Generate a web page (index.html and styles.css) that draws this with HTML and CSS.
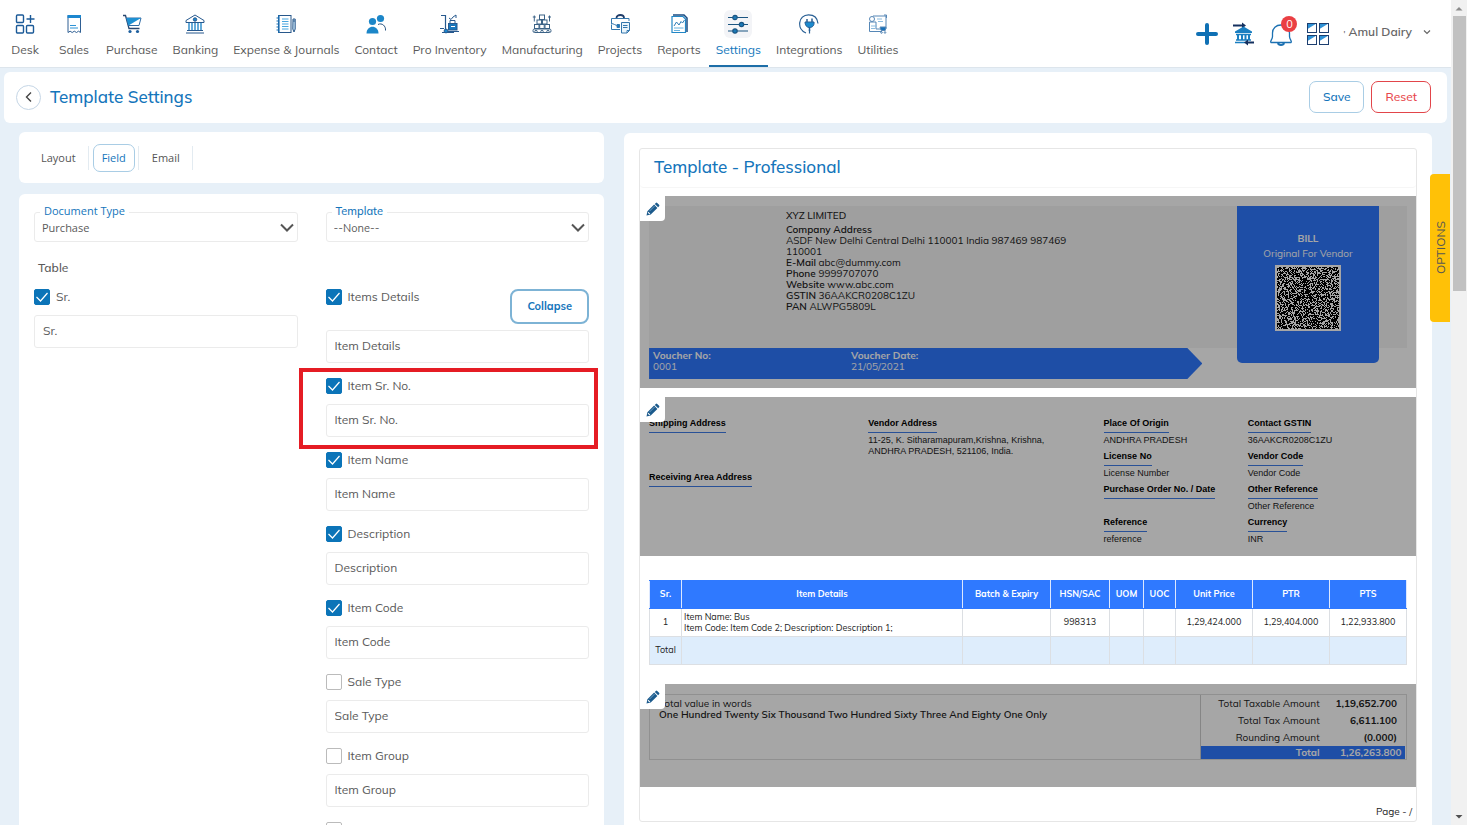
FILE: index.html
```html
<!DOCTYPE html>
<html lang="en">
<head>
<meta charset="utf-8">
<meta name="viewport" content="width=device-width, initial-scale=1">
<title>Template Settings</title>
<link rel="stylesheet" href="styles.css">
</head>
<body>
<svg class="sprite" aria-hidden="true">
  <symbol id="pencil" viewBox="0 0 14 14">
    <path fill="#1b5a8c" d="M9.8.9a1 1 0 0 1 1.4 0l1.9 1.9a1 1 0 0 1 0 1.4l-1 1-3.3-3.3zM8.1 2.6l3.300 3.300-6.700 6.700L.5 13.500l.9-4.200z"/>
    <path fill="#fff" d="M2.300 9.700l2 2-1 .5-1.500-1.500z"/>
    <path stroke="#8db9da" stroke-width=".7" d="M3.600 9l5-5"/>
  </symbol>
</svg>
<div class="app">
  <div class="page">
    <header class="topbar">
      <nav class="nav">
        <a class="nav-item" href="#"><span class="nav-icon"><svg viewBox="0 0 20 20" fill="none" stroke="#1b5a98" stroke-width="1.400"><rect x="1.500" y="1" width="7" height="7.500" rx="1"/><rect x="1.500" y="11.500" width="7" height="7.500" rx="1"/><rect x="11.500" y="11.500" width="7" height="7.500" rx="1"/><path d="M15.500 1v8M11.500 5h8"/></svg></span>Desk</a>
        <a class="nav-item" href="#"><span class="nav-icon"><svg viewBox="0 0 20 20" fill="none"><path d="M4 1.500h12.500v17l-2-1.300-2 1.300-2.200-1.300-2.100 1.300-2.100-1.300L4 18.500z" stroke="#2f5f93"/><path d="M3.500 1h13.500v3H3.500z" fill="#1c87cf"/><path d="M6 11.500h6M6 14h8" stroke="#2d93d6"/></svg></span>Sales</a>
        <a class="nav-item" href="#"><span class="nav-icon"><svg viewBox="0 0 20 20" fill="none"><path d="M1 1.500h2.500L7 14.500h10.500" stroke="#27466f" stroke-width="1.300"/><path d="M4.500 4H19l-2 7.500H6.500z" stroke="#2f6ba5"/><path d="M4.500 4H19L6.500 11.500z" fill="#1e90d2"/><circle cx="8" cy="17.500" r="1.600" fill="#1d5f9e"/><circle cx="15.500" cy="17.500" r="1.600" fill="#1d5f9e"/></svg></span>Purchase</a>
        <a class="nav-item" href="#"><span class="nav-icon"><svg viewBox="0 0 20 20" fill="none" stroke="#27598e"><path d="M1 6.500L10 1l9 5.500v2H1z"/><circle cx="10" cy="5.500" r="1.700" fill="#1c87cf"/><path d="M4 9v7M7 9v7M10 9v7M13 9v7M16 9v7" stroke="#2688c9" stroke-width="1.400"/><path d="M2 16.500h16M1 19h18" stroke-width="1.200"/></svg></span>Banking</a>
        <a class="nav-item" href="#"><span class="nav-icon"><svg viewBox="0 0 20 20" fill="none" stroke="#28588b"><rect x="2.500" y="1.500" width="12.500" height="17"/><path d="M.5 4h3M.5 7h3M.5 10h3M.5 13h3M.5 16h3M3 1v18" stroke="#1b70b5" stroke-width="1.200"/><path d="M6 5h6.500M6 7.500h6.500M6 10h6.500M6 12.500h6.500M6 15h6.500" stroke="#49a6df"/><path d="M17 5h2.200v10L18 18l-1.200-3zM17 7h2" fill="#c7e2f5"/></svg></span>Expense &amp; Journals</a>
        <a class="nav-item" href="#"><span class="nav-icon"><svg viewBox="0 0 20 20"><g fill="#1c86c8"><circle cx="6.500" cy="7.500" r="3.600"/><circle cx="14.500" cy="4.500" r="3.600"/><path d="M.5 19.500c0-9 12-9 12 0z"/></g><path d="M12 10.500c4-2 8 1.500 7.500 6" fill="none" stroke="#27527f"/></svg></span>Contact</a>
        <a class="nav-item" href="#"><span class="nav-icon"><svg viewBox="0 0 20 20" fill="none" stroke="#27598e"><path d="M1 1.500h4.500V16M7.500 17.500H19M0 14.500h4M2 18.500h12" stroke-width="1.200"/><circle cx="6" cy="17" r="1.900" fill="#1c87cf"/><rect x="8.500" y="9.500" width="8.500" height="6.500" fill="#1878be"/><path d="M10 9V6.500h5V9M9 4l2 1.500 2-2.500 3-2v3M11 12h3" /><path d="M11 12.500h4" stroke="#fff"/></svg></span>Pro Inventory</a>
        <a class="nav-item" href="#"><span class="nav-icon"><svg viewBox="0 0 20 20" fill="none" stroke="#3b6286"><rect x="7.500" y="1" width="5" height="4.500"/><rect x="5" y="6" width="4.500" height="4"/><rect x="10.500" y="6" width="4.500" height="4"/><rect x="2.500" y="10.500" width="4.500" height="4"/><rect x="7.700" y="10.500" width="4.500" height="4"/><rect x="13" y="10.500" width="4.500" height="4"/><rect x="1" y="15" width="18" height="3.500" rx="1.500"/><path d="M.8 3h3M2.300 1.500v6M16 3h3M17.500 1.500v6"/><circle cx="4" cy="17.500" r="1.200"/><circle cx="10" cy="17.500" r="1.200"/><circle cx="16" cy="17.500" r="1.200"/></svg></span>Manufacturing</a>
        <a class="nav-item" href="#"><span class="nav-icon"><svg viewBox="0 0 20 20" fill="none" stroke="#3477ad"><path d="M6.500 4c0-4 7.500-4 7.500 0" stroke="#1f3c69" stroke-width="1.800"/><path d="M10 15.500H1.500v-5M1.500 9V4.500h17.500V7" /><path d="M1 9.500c3 0 4 2 8 2.500" /><path d="M7 10.500h2.500v3H7z" fill="#1c79bb"/><path d="M11.500 8.500h8v8L17 19h-5.500z" fill="#eaf5fc"/><path d="M13 11.500h4.500M13 13.500h4.500M17 19v-2.500h2.500"/></svg></span>Projects</a>
        <a class="nav-item" href="#"><span class="nav-icon"><svg viewBox="0 0 20 20" fill="none"><path d="M3 2.500h11l2.500 2.500v13.500H3z" stroke="#2287c6" stroke-width="1.200"/><path d="M4 1h11l3 3v14" stroke="#1a4c83" stroke-width="1.500"/><path d="M5 12l2.500-4 2.500 3 2-3.500 1.500 1.500 2-3" stroke="#2c7cb6"/><path d="M5 14h9.500M5 16.500h6" stroke="#67b2df"/></svg></span>Reports</a>
        <a class="nav-item active" href="#"><span class="nav-icon"><svg viewBox="0 0 20 20" stroke="#1b5582" stroke-width="1.200" fill="#1c79b7"><path d="M0 3.500h20M0 10.500h20M0 17h20"/><circle cx="7" cy="3.500" r="2.200"/><circle cx="13.500" cy="10.500" r="2.200"/><circle cx="7" cy="17" r="2.200"/></svg></span>Settings</a>
        <a class="nav-item" href="#"><span class="nav-icon"><svg viewBox="0 0 20 20" fill="none" stroke="#285f94"><path d="M10.500 19.500v-3.800M7 19C-2.500 15.500-1 1 9.500.8 15.500.8 18.500 4 19 9.500" stroke-width="1.200"/><path d="M6 8h9c.5 3.500-1.500 5.500-4.500 5.500S6 11 6 8z" fill="#1c8bce"/><path d="M8 8V5M13 8V4.500M10.500 13v4" stroke-width="1.500"/></svg></span>Integrations</a>
        <a class="nav-item" href="#"><span class="nav-icon"><svg viewBox="0 0 20 20" fill="none" stroke="#5687b6"><path d="M5 2h13v13M18 15H8V8H1.500v9.500H14"/><circle cx="4" cy="5" r="2.500"/><path d="M9 5h5M10 7.500h5M3 12h6M3 14.500h4" stroke="#8bbce0"/><path d="M12 13h6l-.8 3.500h-4z" fill="#1670b8"/><circle cx="13.500" cy="18.500" r=".8"/><circle cx="17" cy="18.500" r=".8"/><path d="M16 1h2.500v3"/></svg></span>Utilities</a>
      </nav>
      <div class="tools">
        <button class="tool" type="button" aria-label="Add"><svg viewBox="0 0 24 24"><path d="M12 3v18M3 12h18" stroke="#0f70b4" stroke-width="4" stroke-linecap="round"/></svg></button>
        <button class="tool" type="button" aria-label="Bank transfer"><svg viewBox="0 0 24 24" fill="none"><path d="M1 3.500h10" stroke="#14305f" stroke-width="2"/><path d="M10 .5L14 3.500 10 6.500z" fill="#14305f"/><path d="M3 9.500L11.500 4.500l8.500 5v1.500H3z" fill="#1b7fc1"/><path d="M4 12.500h15M4 18h15M3 20.500h10" stroke="#1b7fc1" stroke-width="1.500"/><path d="M6 12v6M10 12v6M13.500 12v6M17 12v6" stroke="#1b7fc1" stroke-width="2"/><path d="M15 20.500h7" stroke="#14305f" stroke-width="2"/><path d="M16 17.500l-4 3 4 3z" fill="#14305f"/></svg></button>
        <button class="tool bell" type="button" aria-label="Notifications"><svg viewBox="0 0 24 24" fill="none" stroke="#1c71b2" stroke-width="1.300"><path d="M2 20.500c-1.500-1 1.500-3 1.500-6V11c0-4.500 3.500-8 8.500-8s8.500 3.500 8.500 8v3.500c0 3 3 5 1.500 6z"/><path d="M9 21c.5 2.500 5.500 2.500 6 0" stroke-width="2"/></svg><span class="badge">0</span></button>
        <button class="tool" type="button" aria-label="Apps"><svg viewBox="0 0 24 24" fill="none"><g fill="#2d91d6"><path d="M1.500 1.500h9l-9 5.500zM13.500 1.500h9l-9 5.500zM1.500 13.500h9l-9 5.500zM13.500 13.500h9l-9 5.500z"/></g><g stroke="#1d3f70"><rect x="1.500" y="1.500" width="9" height="9"/><rect x="13.500" y="1.500" width="9" height="9"/><rect x="1.500" y="13.500" width="9" height="9"/><rect x="13.500" y="13.500" width="9" height="9"/></g></svg></button>
        <button class="account" type="button"><span><small>'</small> Amul Dairy</span><svg viewBox="0 0 8 6" fill="none" stroke="#666" stroke-width="1.200"><path d="M1 1.500l3 3 3-3"/></svg></button>
      </div>
    </header>

    <section class="titlebar">
      <button class="back" type="button" aria-label="Back"><svg viewBox="0 0 10 10" fill="none" stroke="#444" stroke-width="1.400"><path d="M7 .5L2.500 5 7 9.500"/></svg></button>
      <h1>Template Settings</h1>
      <button class="btn" type="button">Save</button>
      <button class="btn danger" type="button">Reset</button>
    </section>

    <main class="content">
      <div class="left">
        <div class="card tabs">
          <div class="tab-slot"><button class="tab" type="button">Layout</button></div>
          <div class="tab-slot"><button class="tab on" type="button">Field</button></div>
          <div class="tab-slot"><button class="tab" type="button">Email</button></div>
        </div>
        <form class="card form">
          <div class="select-box">
            <label for="doc">Document Type</label>
            <select id="doc"><option>Purchase</option></select>
            <svg viewBox="0 0 14 9" fill="none" stroke="#555" stroke-width="2"><path d="M1 1.500l6 6 6-6"/></svg>
          </div>
          <div class="select-box rounded-face">
            <label for="tpl">Template</label>
            <select id="tpl"><option>--None--</option></select>
            <svg viewBox="0 0 14 9" fill="none" stroke="#555" stroke-width="2"><path d="M1 1.500l6 6 6-6"/></svg>
          </div>
          <h2>Table</h2>
          <div class="column">
            <div class="field">
              <label class="check"><input type="checkbox" checked>Sr.</label>
              <input class="text" type="text" aria-label="Sr." value="Sr.">
            </div>
          </div>
          <div class="column">
            <div class="field">
              <div class="check-row">
                <label class="check"><input type="checkbox" checked>Items Details</label>
                <button class="btn collapse" type="button">Collapse</button>
              </div>
              <input class="text" type="text" aria-label="Items Details" value="Item Details">
            </div>
            <div class="field marked">
              <label class="check"><input type="checkbox" checked>Item Sr. No.</label>
              <input class="text" type="text" aria-label="Item Sr. No." value="Item Sr. No.">
            </div>
            <div class="field">
              <label class="check"><input type="checkbox" checked>Item Name</label>
              <input class="text" type="text" aria-label="Item Name" value="Item Name">
            </div>
            <div class="field">
              <label class="check"><input type="checkbox" checked>Description</label>
              <input class="text" type="text" aria-label="Description" value="Description">
            </div>
            <div class="field">
              <label class="check"><input type="checkbox" checked>Item Code</label>
              <input class="text" type="text" aria-label="Item Code" value="Item Code">
            </div>
            <div class="field">
              <label class="check"><input type="checkbox">Sale Type</label>
              <input class="text" type="text" aria-label="Sale Type" value="Sale Type">
            </div>
            <div class="field">
              <label class="check"><input type="checkbox">Item Group</label>
              <input class="text" type="text" aria-label="Item Group" value="Item Group">
            </div>
            <div class="field">
              <label class="check"><input type="checkbox" aria-label="Next field"></label>
            </div>
          </div>
        </form>
      </div>

      <div class="card preview">
        <article class="sheet">
          <h2 class="sheet-title">Template - Professional</h2>

          <section class="block">
            <button class="edit" type="button" aria-label="Edit header"><svg><use href="#pencil"/></svg></button>
            <div class="company">
              <div class="company-text">
                <p class="company-name">XYZ LIMITED</p>
                <p><b>Company Address</b></p>
                <p>ASDF New Delhi Central Delhi 110001 India 987469 987469<br>110001</p>
                <p><b>E-Mail</b> abc@dummy.com</p>
                <p><b>Phone</b> 9999707070</p>
                <p><b>Website</b> www.abc.com</p>
                <p><b>GSTIN</b> 36AAKCR0208C1ZU</p>
                <p><b>PAN</b> ALWPG5809L</p>
              </div>
              <div class="bill">
                <b>BILL</b>
                <span>Original For Vendor</span>
                <svg id="qr" viewBox="0 0 66 66" shape-rendering="crispEdges" role="img" aria-label="QR code"></svg>
              </div>
            </div>
            <div class="voucher">
              <p><b>Voucher No:</b><br>0001</p>
              <p><b>Voucher Date:</b><br>21/05/2021</p>
            </div>
          </section>

          <section class="block">
            <button class="edit" type="button" aria-label="Edit addresses"><svg><use href="#pencil"/></svg></button>
            <div class="details">
              <dl class="wide">
                <dt>Shipping Address</dt><dd></dd>
                <dt>Receiving Area Address</dt><dd></dd>
              </dl>
              <dl>
                <dt>Vendor Address</dt><dd>11-25, K. Sitharamapuram,Krishna, Krishna,<br>ANDHRA PRADESH, 521106, India.</dd>
              </dl>
              <dl>
                <dt>Place Of Origin</dt><dd>ANDHRA PRADESH</dd>
                <dt>License No</dt><dd>License Number</dd>
                <dt>Purchase Order No. / Date</dt><dd></dd>
                <dt>Reference</dt><dd>reference</dd>
              </dl>
              <dl>
                <dt>Contact GSTIN</dt><dd>36AAKCR0208C1ZU</dd>
                <dt>Vendor Code</dt><dd>Vendor Code</dd>
                <dt>Other Reference</dt><dd>Other Reference</dd>
                <dt>Currency</dt><dd>INR</dd>
              </dl>
            </div>
          </section>

          <table class="items">
            <colgroup><col class="c-sr"><col><col class="c-batch"><col class="c-hsn"><col class="c-uom"><col class="c-uoc"><col class="c-price"><col class="c-price"><col class="c-price"></colgroup>
            <thead><tr><th>Sr.</th><th>Item Details</th><th>Batch &amp; Expiry</th><th>HSN/SAC</th><th>UOM</th><th>UOC</th><th>Unit Price</th><th>PTR</th><th>PTS</th></tr></thead>
            <tbody>
              <tr><td>1</td><td class="item">Item Name: Bus<br>Item Code: Item Code 2; Description: Description 1;</td><td></td><td>998313</td><td></td><td></td><td>1,29,424.000</td><td>1,29,404.000</td><td>1,22,933.800</td></tr>
              <tr class="sum"><td>Total</td><td></td><td></td><td></td><td></td><td></td><td></td><td></td><td></td></tr>
            </tbody>
          </table>

          <section class="block totals-block">
            <button class="edit" type="button" aria-label="Edit totals"><svg><use href="#pencil"/></svg></button>
            <div class="totals">
              <p class="words">Total value in words<br><b>One Hundred Twenty Six Thousand Two Hundred Sixty Three And Eighty One Only</b></p>
              <table class="amounts">
                <tr><th>Total Taxable Amount</th><td>1,19,652.700</td></tr>
                <tr><th>Total Tax Amount</th><td>6,611.100</td></tr>
                <tr><th>Rounding Amount</th><td>(0.000)</td></tr>
                <tr class="grand"><th>Total</th><td>1,26,263.800</td></tr>
              </table>
            </div>
          </section>
          <p class="page-no">Page - /</p>
        </article>
      </div>
    </main>
    <button class="options" type="button">OPTIONS</button>
  </div>
  <div class="scrollbar" aria-hidden="true">
    <svg viewBox="0 0 16 16"><path d="M4.500 10.500L8 7l3.500 3.500z" fill="#8b8b8b"/></svg>
    <div class="thumb"></div>
    <svg viewBox="0 0 16 16"><path d="M4.500 6L8 9.500 11.500 6z" fill="#505050"/></svg>
  </div>
</div>
<script src="qr.js"></script>
</body>
</html>
```

FILE: styles.css
```css
* { box-sizing: border-box; }
body {
  margin: 0;
  font-family: Mulish, Muli, Lato, sans-serif;
  font-size: 12px;
  color: #5a5a5a;
  background: #e7f0f8;
}
button, input, select { font: inherit; color: inherit; }
button { cursor: pointer; }
p, h1, h2, dl, dd { margin: 0; }
.sprite { display: none; }

.app { display: flex; height: 100vh; overflow: hidden; }
.page { position: relative; flex: 1; min-width: 0; overflow: hidden; }

.topbar {
  display: flex;
  justify-content: space-between;
  height: 68px;
  padding: 0 20px 0 1px;
  background: #fff;
  border-bottom: 1px solid #dde5ec;
}
.nav { display: flex; gap: 1px; }
.nav-item {
  display: flex;
  flex-direction: column;
  align-items: center;
  gap: 3px;
  min-width: 48px;
  padding: 10px 7px 0;
  line-height: 17px;
  color: #5a5a5a;
  text-decoration: none;
  white-space: nowrap;
  border-bottom: 2px solid transparent;
}
.nav-icon { display: flex; padding: 4px; border-radius: 6px; }
.nav-icon svg { width: 20px; height: 20px; }
.nav-item.active { color: #1377bb; border-color: #1d6ea8; }
.nav-item.active .nav-icon { background: #f3f4f7; }

.tools { display: flex; align-items: center; gap: 13px; }
.tool { position: relative; display: flex; padding: 0; border: 0; background: none; }
.tool svg { width: 24px; height: 24px; }
.badge {
  position: absolute;
  top: -6px;
  right: -4px;
  width: 16px;
  height: 16px;
  border-radius: 50%;
  background: #ea3f43;
  color: #fff;
  font-size: 11px;
  line-height: 16px;
}
.account {
  display: flex;
  align-items: center;
  gap: 11px;
  padding: 0 0 4px;
  border: 0;
  background: none;
  font-weight: 600;
  color: #666;
}
.account small { font-size: 8px; }
.account svg { width: 8px; height: 6px; }

.titlebar {
  display: flex;
  align-items: center;
  gap: 7px;
  margin: 4px 4px 0;
  padding: 9px 16px 10px 12px;
  background: #fff;
  border-radius: 6px;
}
.titlebar h1 {
  flex: 1;
  padding-left: 2px;
  font-size: 17px;
  font-weight: 500;
  line-height: 24px;
  color: #1475bb;
}
.back {
  display: flex;
  align-items: center;
  justify-content: center;
  width: 25px;
  height: 25px;
  padding: 0;
  border: 1px solid #c5d6e6;
  border-radius: 50%;
  background: #fff;
}
.back svg { width: 10px; height: 10px; }
.btn {
  height: 32px;
  padding: 0 13px 2px;
  border: 1px solid #a9cde5;
  border-radius: 7px;
  background: #fff;
  color: #1475bb;
  font-weight: 500;
}
.btn.danger { border-color: #e2454a; color: #e8474c; }

.content {
  display: grid;
  grid-template-columns: 42fr 58fr;
  gap: 20px;
  align-items: start;
  padding: 9px 19px 0;
}
.left { display: grid; gap: 11px; }
.card { background: #fff; border-radius: 6px; }
.tabs {
  display: flex;
  align-items: center;
  height: 51px;
  padding: 0 9px;
  font-family: "Open Sans", sans-serif;
  font-size: 11px;
}
.tab-slot {
  display: flex;
  align-items: center;
  height: 24px;
  padding: 0 3px 0 4px;
  border-right: 1px solid #e3ebf1;
}
.tab {
  height: 28px;
  padding: 0 8px;
  border: 1px solid transparent;
  border-radius: 7px;
  background: none;
  color: #555;
}
.tab.on { border-color: #a9cde5; color: #1475bb; }

.form {
  display: grid;
  grid-template-columns: 1fr 1fr;
  column-gap: 28px;
  padding: 18px 15px 0;
}
.select-box {
  position: relative;
  height: 30px;
  border: 1px solid #ebebeb;
  border-radius: 3px;
  font-family: "Open Sans", sans-serif;
  font-size: 11px;
}
.select-box.rounded-face { font-family: Mulish, Muli, Lato, sans-serif; }
.rounded-face label { font-weight: 500; }
.select-box label {
  position: absolute;
  top: -10px;
  left: 5px;
  padding: 0 4px;
  line-height: 16px;
  background: #fff;
  color: #1475bb;
}
.select-box select {
  width: 100%;
  height: 100%;
  padding: 1px 7px 0;
  border: 0;
  background: none;
  appearance: none;
}
.select-box svg { position: absolute; right: 3px; top: 10px; width: 14px; height: 9px; }
.form h2 {
  grid-column: 1 / -1;
  padding: 18px 4px 13px;
  font-size: 12px;
  font-weight: 500;
  line-height: 16px;
}
.field { position: relative; padding-bottom: 15px; }
.check { display: flex; align-items: center; gap: 6px; height: 16px; margin-bottom: 10px; line-height: 14px; }
.check input {
  appearance: none;
  width: 16px;
  height: 16px;
  margin: 0;
  border: 1px solid #bbb;
  border-radius: 2px;
  background: #fff;
}
.check input:checked {
  border-color: #0b74b8;
  background: #0b74b8 url("data:image/svg+xml,%3Csvg xmlns='http://www.w3.org/2000/svg' viewBox='0 0 14 14'%3E%3Cpath d='M1.500 7l4 4 7-8' fill='none' stroke='white' stroke-width='1.200'/%3E%3C/svg%3E");
}
.text {
  display: block;
  width: 100%;
  height: 33px;
  padding: 0 8px 2px;
  border: 1px solid #ebebeb;
  border-radius: 3px;
  background: #fff;
}
.check-row { display: flex; justify-content: space-between; height: 41px; }
.collapse {
  height: 35px;
  padding: 0 15px 2px;
  border: 2px solid #7db3d5;
  border-radius: 8px;
  font-size: 11px;
  font-weight: 700;
}
.marked::after {
  content: "";
  position: absolute;
  inset: -10px -9px 3px -27px;
  border: 4px solid #e51c24;
  pointer-events: none;
}

.preview { margin-top: 1px; padding: 15px; min-height: 720px; }
.sheet {
  border: 1px solid #e6e6e6;
  border-radius: 3px;
  font-size: 10px;
  line-height: 11px;
  color: #222;
}
.sheet-title {
  padding: 6px 14px 8px;
  margin-bottom: 8px;
  border-bottom: 1px solid #f6f6f6;
  border-radius: 4px;
  font-size: 17px;
  font-weight: 500;
  line-height: 24px;
  color: #1475bb;
}
.block { position: relative; padding: 10px 9px 9px; margin-bottom: 9px; }
.block::after {
  content: "";
  position: absolute;
  inset: 0;
  background: rgba(0, 0, 0, 0.35);
  pointer-events: none;
}
.edit {
  position: absolute;
  z-index: 1;
  top: 0;
  left: 0;
  display: flex;
  align-items: center;
  justify-content: center;
  width: 25px;
  height: 25px;
  padding: 0;
  border: 0;
  border-radius: 0 0 4px 0;
  background: #fff;
}
.edit svg { width: 14px; height: 14px; }
.company {
  display: flex;
  justify-content: space-between;
  height: 142px;
  padding: 0 28px 0 137px;
  background: #f4f4f4;
}
.company-text { padding-top: 4px; }
.company-text b { font-weight: 600; }
.company-name { padding-bottom: 3px; font-weight: 500; }
.bill {
  display: flex;
  flex-direction: column;
  align-items: center;
  gap: 4px;
  width: 142px;
  height: 157px;
  padding-top: 27px;
  border-radius: 0 0 5px 5px;
  background: #2f79ff;
  color: #fff;
}
.bill svg { width: 66px; height: 66px; margin-top: 2px; }
.voucher {
  display: grid;
  grid-template-columns: 198px 1fr;
  width: 73%;
  height: 31px;
  padding: 2px 4px;
  background: #2f79ff;
  color: #fff;
  clip-path: polygon(0 0, calc(100% - 15px) 0, 100% 50%, calc(100% - 15px) 100%, 0 100%);
}

.details {
  display: grid;
  grid-template-columns: 219fr 235fr 144fr 159fr;
  height: 140px;
  padding-top: 10px;
  font-family: "Liberation Sans", Arial, sans-serif;
  font-size: 9px;
}
.details dt {
  width: fit-content;
  height: 16px;
  border-bottom: 1px solid #3f7de8;
  line-height: 12px;
  font-weight: 700;
  color: #000;
}
.details dd { min-height: 17px; padding-top: 2px; }
.details .wide dd { min-height: 38px; }

.items {
  width: calc(100% - 18px);
  margin: 24px 9px 19px;
  border-collapse: collapse;
  table-layout: fixed;
  font-size: 9px;
  text-align: center;
}
.items th, .items td { height: 28px; padding: 0 2px 2px; border: 1px solid #dcdfe3; }
.items th { border-color: #2f79ff #dce8ff; background: #2f79ff; color: #fff; }
.items .item { text-align: left; }
.items .sum td { background: #deedfc; }
.c-sr { width: 32px; }
.c-batch { width: 88px; }
.c-hsn { width: 59px; }
.c-uom { width: 34px; }
.c-uoc { width: 32px; }
.c-price { width: 77px; }

.totals-block { height: 103px; margin-bottom: 0; }
.totals { display: grid; grid-template-columns: 551fr 206fr; border: 1px solid #ddd; }
.words { padding: 3px 9px; }
.words b { font-weight: 600; }
.amounts { border-collapse: collapse; border-left: 1px solid #ccc; }
.amounts th, .amounts td { padding: 0 8px 1px 0; height: 17px; text-align: right; }
.amounts th { width: 62%; font-weight: 400; }
.amounts td { font-weight: 700; }
.amounts .grand { background: #2f79ff; color: #fff; }
.amounts .grand th, .amounts .grand td { height: 13px; font-weight: 700; }
.amounts .grand td { padding-right: 4px; }
.page-no { padding: 19px 4px 4px; text-align: right; }

.options {
  position: absolute;
  top: 174px;
  right: 1px;
  width: 20px;
  height: 148px;
  padding: 0;
  border: 0;
  border-radius: 0 4px 4px 0;
  background: #ffc107;
  color: #555;
  writing-mode: vertical-rl;
  transform: rotate(180deg);
}
.scrollbar {
  display: flex;
  flex-direction: column;
  align-items: center;
  width: 16px;
  background: #f1f1f1;
}
.scrollbar svg { width: 16px; height: 16px; }
.scrollbar svg:last-child { margin-top: auto; }
.thumb { width: 13px; height: calc(100% / 3); background: #c1c1c1; }
```

FILE: qr.js
```js
(function () {
  var svg = document.getElementById('qr');
  var seed = 20210521;
  var d = '';
  function next() {
    seed = (seed * 48271) % 2147483647;
    return seed / 2147483647;
  }
  for (var y = 2; y < 64; y++) {
    for (var x = 2; x < 64; x++) {
      if (next() > 0.42) d += 'M' + x + ' ' + y + 'h1v1h-1z';
    }
  }
  svg.innerHTML = '<path fill="#fff" d="M0 0h66v66H0z"/><path d="' + d + '"/>';
})();
```
